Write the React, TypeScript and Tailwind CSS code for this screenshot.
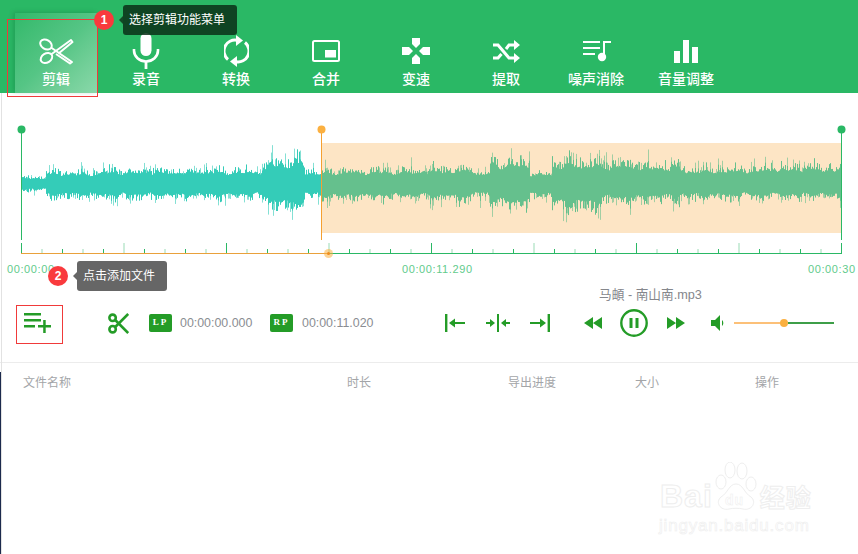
const FONT = "font-['Liberation_Sans','Noto_Sans_CJK_SC',sans-serif]";

// [end x, up, down] of each stretch of the wave
const envelope = [
  [46, 9, 10],
  [100, 16, 19],
  [262, 19, 20],
  [268, 24, 24],
  [305, 33, 33],
  [321, 18, 18],
  [345, 18, 22],
  [430, 19, 21],
  [475, 21, 23],
  [490, 16, 17],
  [530, 32, 32],
  [552, 15, 18],
  [600, 31, 34],
  [640, 29, 25],
  [680, 27, 23],
  [760, 21, 20],
  [843, 24, 20],
];

// small seeded random so the wave looks the same on every load
function makeWave() {
  let seed = 11;
  const rnd = () => {
    seed = (seed * 16807) % 2147483647;
    return seed / 2147483647;
  };
  const bars: { x: number; up: number; down: number; upPeak: number; downPeak: number }[] = [];
  for (let x = 21.5; x < 842; x += 1) {
    const seg = envelope.find((e) => x < e[0]) || envelope[envelope.length - 1];
    const wob = 0.86 + 0.14 * Math.sin(x / 3.1) * Math.sin(x / 11);
    const up = seg[1] * wob * (0.6 + rnd() * rnd() * 0.55);
    const down = seg[2] * wob * (0.6 + rnd() * rnd() * 0.55);
    bars.push({
      x,
      up,
      down,
      upPeak: rnd() > 0.84 ? up * (1.15 + rnd() * 0.45) : up,
      downPeak: rnd() > 0.84 ? down * (1.15 + rnd() * 0.45) : down,
    });
  }
  return bars;
}

const wave = makeWave();
const ticks = Array.from({ length: 41 }, (_, i) => i);

const tabs = [
  { label: '录音', icon: <MicIcon /> },
  { label: '转换', icon: <ConvertIcon /> },
  { label: '合并', icon: <MergeIcon /> },
  { label: '变速', icon: <SpeedIcon /> },
  { label: '提取', icon: <ShuffleIcon /> },
  { label: '噪声消除', icon: <NoiseIcon /> },
  { label: '音量调整', icon: <VolumeBarsIcon /> },
];

function HeaderScissors() {
  return (
    <svg width="36" height="28" viewBox="0 0 36 28" fill="none" stroke="white" strokeWidth="2" strokeLinejoin="round">
      <ellipse cx="8" cy="7.5" rx="6.2" ry="4.6" transform="rotate(32 8 7.5)" />
      <ellipse cx="8.5" cy="21" rx="6.2" ry="4.6" transform="rotate(-32 8.5 21)" />
      <path d="M13 17.5L33 3l1.5 2-14 11.5" />
      <path d="M13 10.5l21 14.5-2 1.5-14-9.5" />
      <circle cx="18" cy="14" r="1" fill="white" stroke="none" />
    </svg>
  );
}

function MicIcon() {
  return (
    <svg width="28" height="36" viewBox="0 0 28 36" fill="white">
      <rect x="8.5" y="0" width="11" height="23" rx="5.5" />
      <path d="M2 16v1.5a12 11 0 0 0 24 0V16" fill="none" stroke="white" strokeWidth="2.6" />
      <rect x="12.6" y="28" width="2.8" height="8" />
    </svg>
  );
}

function ConvertIcon() {
  return (
    <svg width="25" height="32" viewBox="0 0 25 32" fill="none" stroke="white" strokeWidth="3">
      <path d="M4 24.5A11 11 0 0 1 13 5.2" />
      <path d="M21 7.5A11 11 0 0 1 12 26.8" />
      <path d="M12 0l7 5.5-7 5.5z" fill="white" stroke="none" />
      <path d="M13 21l-7 5.5 7 5.5z" fill="white" stroke="none" />
    </svg>
  );
}

function MergeIcon() {
  return (
    <svg width="28" height="22" viewBox="0 0 28 22">
      <rect x="1" y="1" width="26" height="20" rx="1.5" fill="none" stroke="white" strokeWidth="2" />
      <rect x="13" y="10" width="11" height="7.5" fill="white" />
    </svg>
  );
}

function SpeedIcon() {
  return (
    <svg width="28" height="26" viewBox="0 0 28 26" fill="white">
      <path d="M10 0h8v6l-4 4-4-4z" />
      <path d="M10 26h8v-6l-4-4-4 4z" />
      <path d="M0 9v8h7l4-4-4-4z" />
      <path d="M28 9v8h-7l-4-4 4-4z" />
    </svg>
  );
}

function ShuffleIcon() {
  return (
    <svg width="27" height="23" viewBox="0 0 27 23" fill="none" stroke="white" strokeWidth="3">
      <path d="M0 5h5l11 13h6" />
      <path d="M0 18h5l3.5-4M13 9l3-4h6" />
      <path d="M21 0l6 5-6 5zM21 13l6 5-6 5z" fill="white" stroke="none" />
    </svg>
  );
}

function NoiseIcon() {
  return (
    <svg width="29" height="21" viewBox="0 0 29 21" fill="white">
      <rect x="1" y="0" width="17" height="2" />
      <rect x="1" y="6" width="17" height="2" />
      <rect x="1" y="12" width="12" height="2" />
      <path d="M21 0h8v2h-6v15h-2z" />
      <circle cx="20" cy="16" r="4.2" />
    </svg>
  );
}

function VolumeBarsIcon() {
  return (
    <svg width="24" height="23" viewBox="0 0 24 23" fill="white">
      <rect x="0" y="11" width="6" height="12" />
      <rect x="9" y="0" width="6" height="23" />
      <rect x="18" y="7" width="6" height="16" />
    </svg>
  );
}

function AddListIcon() {
  return (
    <svg width="28" height="20" viewBox="0 0 28 20" fill="#249c27">
      <rect x="0" y="0" width="17" height="2.5" />
      <rect x="0" y="6" width="17" height="2.5" />
      <rect x="0" y="12" width="11" height="2.5" />
      <rect x="14" y="12" width="13" height="2.5" />
      <rect x="19.2" y="7" width="2.5" height="13" />
    </svg>
  );
}

function CutIcon() {
  return (
    <svg width="21" height="21" viewBox="0 0 21 21" fill="none" stroke="#249c27" strokeWidth="2.6">
      <circle cx="4.6" cy="4.8" r="3.2" />
      <circle cx="4.6" cy="16.2" r="3.2" />
      <path d="M7.2 7l13 13M7.2 14L20.2 1" />
    </svg>
  );
}

function Badge({ text }: { text: string }) {
  return (
    <span className="flex h-[18px] w-[23px] items-center justify-center rounded-[2px] bg-[#249c27] font-['Liberation_Serif',serif] text-[9px] font-bold tracking-[2px] text-white">
      {text}
    </span>
  );
}

function PointLeft() {
  return (
    <svg width="20" height="18" viewBox="0 0 20 18" fill="#249c27">
      <rect x="0" y="0" width="2.4" height="18" />
      <rect x="9" y="8" width="11" height="2" />
      <path d="M4 9l6-4.5v9z" />
    </svg>
  );
}

function PointBoth() {
  return (
    <svg width="24" height="18" viewBox="0 0 24 18" fill="#249c27">
      <rect x="11" y="0" width="2" height="18" />
      <rect x="0" y="8" width="5" height="2" />
      <path d="M9 9l-5-4v8z" />
      <rect x="19" y="8" width="5" height="2" />
      <path d="M15 9l5-4v8z" />
    </svg>
  );
}

function PointRight() {
  return (
    <svg width="20" height="18" viewBox="0 0 20 18" fill="#249c27">
      <rect x="17.6" y="0" width="2.4" height="18" />
      <rect x="0" y="8" width="11" height="2" />
      <path d="M16 9l-6-4.5v9z" />
    </svg>
  );
}

function Rewind() {
  return (
    <svg width="18" height="12" viewBox="0 0 18 12" fill="#249c27">
      <path d="M0 6l9-6v12zM9 6l9-6v12z" />
    </svg>
  );
}

function Forward() {
  return (
    <svg width="18" height="12" viewBox="0 0 18 12" fill="#249c27">
      <path d="M18 6L9 0v12zM9 6L0 0v12z" />
    </svg>
  );
}

function PauseCircle() {
  return (
    <svg width="28" height="28" viewBox="0 0 28 28" fill="#249c27">
      <circle cx="14" cy="14" r="12.7" fill="none" stroke="#249c27" strokeWidth="2.4" />
      <rect x="9.5" y="9" width="3" height="10" />
      <rect x="15.5" y="9" width="3" height="10" />
    </svg>
  );
}

function Speaker() {
  return (
    <svg width="14" height="16" viewBox="0 0 14 16" fill="#249c27">
      <path d="M0 5h4l5-5v16l-5-5H0z" />
      <path d="M11 5a4 4 0 0 1 0 6z" />
    </svg>
  );
}

function Watermark() {
  return (
    <div className="absolute left-[660px] top-[462px] flex flex-col items-start">
      <div className="flex h-[50px] items-end text-[32px] font-bold leading-[32px] tracking-[1px] text-white [-webkit-text-stroke:1px_#eeeeee]">
        <span>Bai</span>
        <svg width="46" height="50" viewBox="0 0 46 50" fill="white" stroke="#eeeeee" strokeWidth="1">
          <ellipse cx="8" cy="20" rx="5" ry="7" />
          <ellipse cx="17" cy="8" rx="5" ry="8" />
          <ellipse cx="29" cy="9" rx="5" ry="8" />
          <ellipse cx="38" cy="22" rx="5" ry="7" />
          <path d="M23 22c-7 0-8 9-15 13-6 5-1 14 8 12 5-1 9-1 14 0 9 2 14-7 8-12-7-4-8-13-15-13z" />
          <text x="12" y="43" fontSize="14" fontWeight="bold" stroke="#eeeeee" strokeWidth="0.5">du</text>
        </svg>
        <span className="ml-[1px] text-[25px] leading-[28px]">经验</span>
      </div>
      <div className="mt-[3px] -ml-[1px] text-[17px] leading-[22px] tracking-[0.8px] text-white [-webkit-text-stroke:0.6px_#eeeeee]">jingyan.baidu.com</div>
    </div>
  );
}

export default function App() {
  return (
    <div className={`relative h-[554px] w-[858px] overflow-hidden bg-white ${FONT}`}>
      {/* Top tabs */}
      <div className="flex h-[93px] items-end bg-[#2ab865] pl-[11px]">
        <div className="flex h-[80px] w-[90px] justify-center">
          <div className="flex w-[82px] flex-col items-center bg-gradient-to-br from-[#30b96a] via-[#55c585] to-[#8ad8aa] shadow-[-2px_-1px_4px_rgba(20,110,60,0.3)]">
            <div className="mt-[16px] flex h-[44px] items-center justify-center"><HeaderScissors /></div>
            <span className="-mt-[3px] text-[14px] font-medium leading-[18px] text-white">剪辑</span>
          </div>
        </div>
        {tabs.map((t) => (
          <div key={t.label} className="flex h-[80px] w-[90px] flex-col items-center">
            <div className="mt-[16px] flex h-[44px] items-center justify-center">{t.icon}</div>
            <span className="-mt-[3px] text-[14px] font-medium leading-[18px] text-white">{t.label}</span>
          </div>
        ))}
      </div>

      {/* Waveform */}
      <svg width="858" height="170" viewBox="0 93 858 170" className="block">
        <rect x="321" y="143" width="521" height="90" fill="#fde5c5" />
        {wave.map((b) => {
          const color = b.x < 321 ? '#34ccb8' : '#65c08d';
          return (
            <g key={b.x} stroke={color} strokeWidth="1">
              <line x1={b.x} x2={b.x} y1={183.5 - b.upPeak} y2={183.5 + b.downPeak} opacity="0.6" />
              <line x1={b.x} x2={b.x} y1={183.5 - b.up} y2={183.5 + b.down} />
            </g>
          );
        })}
        <line x1="21.5" x2="21.5" y1="129" y2="240" stroke="#2ab865" />
        <circle cx="21.5" cy="129.5" r="4" fill="#2ab865" />
        <line x1="321.5" x2="321.5" y1="129" y2="240" stroke="#f5a030" />
        <circle cx="321.5" cy="129.5" r="4" fill="#fbb040" />
        <line x1="841.5" x2="841.5" y1="129" y2="240" stroke="#2ab865" />
        <circle cx="841.5" cy="129.5" r="4" fill="#2ab865" />
        {/* ruler */}
        {ticks.map((i) => {
          const x = 21.5 + i * 20.5;
          return (
            <line
              key={i}
              x1={x}
              x2={x}
              y1={i % 5 === 0 ? 243 : 249}
              y2="253"
              stroke={i % 2 === 1 ? '#9adbb5' : '#2ab865'}
            />
          );
        })}
        <line x1="21" x2="328" y1="253.5" y2="253.5" stroke="#e9a13b" />
        <line x1="328" x2="842" y1="253.5" y2="253.5" stroke="#2ab865" />
        <circle cx="328.5" cy="253.5" r="4.5" fill="#fbb040" opacity="0.55" />
        <circle cx="328.5" cy="253.5" r="1.5" fill="#f08c1c" />
      </svg>

      {/* Time labels */}
      <div className="flex h-[12px] pl-[7px] text-[11px] leading-[12px] tracking-[0.6px] text-[#62cb8c]">
        <span className="w-[395px]">00:00:00</span>
        <span className="w-[406px]">00:00:11.290</span>
        <span>00:00:30</span>
      </div>

      {/* Player controls */}
      <div className="flex h-[88px] flex-col border-b border-[#ececec]">
        <div className="pl-[599px] pt-[12px] text-[12.7px] leading-[16px] text-[#85878c]">马頔 - 南山南.mp3</div>
        <div className="mt-[6px] flex h-[28px] items-center">
          <div className="ml-[24px] w-[84px]"><AddListIcon /></div>
          <div className="w-[41px]"><CutIcon /></div>
          <Badge text="LP" />
          <span className="ml-[8px] w-[72px] whitespace-nowrap text-[12.4px] text-[#8a8d92]">00:00:00.000</span>
          <span className="ml-[18px]"><Badge text="RP" /></span>
          <span className="ml-[9px] w-[72px] whitespace-nowrap text-[12.4px] text-[#8a8d92]">00:00:11.020</span>
          <span className="ml-[71px]"><PointLeft /></span>
          <span className="ml-[21px]"><PointBoth /></span>
          <span className="ml-[20px]"><PointRight /></span>
          <span className="ml-[34px]"><Rewind /></span>
          <span className="ml-[18px]"><PauseCircle /></span>
          <span className="ml-[19px]"><Forward /></span>
          <span className="ml-[26px]"><Speaker /></span>
          <div className="ml-[9px] flex w-[100px] items-center">
            <div className="h-[2px] w-[47px] bg-[#fcc078]" />
            <div className="-ml-[1px] h-[8px] w-[8px] rounded-full bg-[#fbb040]" />
            <div className="h-[2px] flex-1 bg-[#3d9e48]" />
          </div>
        </div>
      </div>

      {/* File table head */}
      <div className="flex pt-[12px] text-[12px] leading-[16px] text-[#a3a5a8]">
        <span className="ml-[23px] w-[324px]">文件名称</span>
        <span className="w-[161px]">时长</span>
        <span className="w-[127px]">导出进度</span>
        <span className="w-[120px]">大小</span>
        <span>操作</span>
      </div>

      {/* Annotations over the screenshot */}
      <div className="absolute left-[7px] top-[19px] h-[78px] w-[91px] border border-[#f03a3a]" />
      <div className="absolute left-[16px] top-[305px] h-[39px] w-[47px] border border-[#f03a3a]" />
      <div className="absolute left-[123px] top-[5px] flex h-[30px] w-[114px] items-center rounded-[3px] bg-[#0b2f17]/85 pl-[6px] text-[12px] text-white before:absolute before:-left-[4px] before:top-[11px] before:border-y-[4px] before:border-r-[4px] before:border-y-transparent before:border-r-[#124a26]">选择剪辑功能菜单</div>
      <div className="absolute left-[94px] top-[10px] flex h-[20px] w-[20px] items-center justify-center rounded-full bg-[#f93a3d] text-[12px] font-bold text-white">1</div>
      <div className="absolute left-[77px] top-[261px] flex h-[30px] w-[90px] items-center rounded-[3px] bg-[#666666] pl-[6px] text-[12px] text-white before:absolute before:-left-[4px] before:top-[11px] before:border-y-[4px] before:border-r-[4px] before:border-y-transparent before:border-r-[#666666]">点击添加文件</div>
      <div className="absolute left-[48px] top-[266px] flex h-[20px] w-[20px] items-center justify-center rounded-full bg-[#f93a3d] text-[12px] font-bold text-white">2</div>

      <Watermark />

      {/* cropped edge of the window behind */}
      <div className="absolute bottom-0 left-[1px] top-[93px] w-[1px] bg-[#e2e2e2]" />
      <div className="absolute bottom-0 left-0 top-[372px] w-[1px] bg-[#1c2a4d]" />
    </div>
  );
}
